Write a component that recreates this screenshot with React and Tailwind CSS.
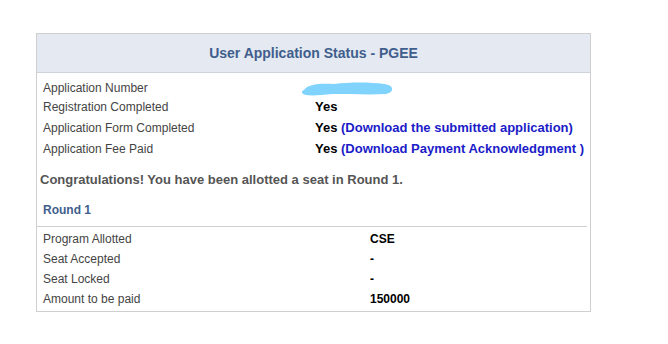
import React from 'react';

const font = { fontFamily: '"Liberation Sans", Arial, sans-serif' };

function Row({ label, children, valueLeft = 'w-[278px]', h = 'h-[20px]', size = 'text-[13px]' }) {
    return (
        <div className={`flex items-center ${h}`}>
            <div className={`${valueLeft} shrink-0 pl-[6px] text-[12px] text-[#444]`}>{label}</div>
            <div className={`${size} font-bold text-black`}>{children}</div>
        </div>
    );
}

function Scribble() {
    return (
        <svg width="96" height="17" viewBox="0 0 96 17" className="block -ml-[15px] mt-[1px]">
            <path
                d="M4 10 C8 4, 20 3, 34 4 C50 2, 70 2, 84 4 C94 5, 95 12, 86 14 C70 15, 50 14, 32 14 C22 15, 12 16, 6 15 C1 14, 1 11, 4 10 Z"
                fill="#7fd3fd"
            />
        </svg>
    );
}

export default function App() {
    return (
        <div className="bg-white w-[668px] h-[344px] pt-[33px] pl-[36px]" style={font}>
            <div className="w-[555px] h-[279px] border border-[#cfcfcf] bg-white">
                {/* Header */}
                <div className="h-[39px] bg-[#e4e9f2] border-b border-[#cfd3da] flex items-center justify-center">
                    <span className="text-[14px] font-bold text-[#3f5e8c]">User Application Status - PGEE</span>
                </div>

                {/* Status rows */}
                <div className="pt-[5px]">
                    <Row label="Application Number" h="h-[19px]">
                        <Scribble />
                    </Row>
                    <Row label="Registration Completed" h="h-[20px]">Yes</Row>
                    <Row label="Application Form Completed" h="h-[21px]">
                        Yes <span className="text-[#1b1bc8]">(Download the submitted application)</span>
                    </Row>
                    <Row label="Application Fee Paid" h="h-[21px]">
                        Yes <span className="text-[#1b1bc8]">(Download Payment Acknowledgment )</span>
                    </Row>
                </div>

                <div className="mt-[11px] pl-[3px] h-[20px] flex items-center text-[13px] font-bold text-[#555]">
                    Congratulations! You have been allotted a seat in Round 1.
                </div>

                <div className="mt-[10px] pl-[6px] h-[20px] flex items-center text-[12px] font-bold text-[#3f5e8c]">
                    Round 1
                </div>

                <div className="mt-[6px] mr-[3px] pt-[2px] border-t border-[#cfcfcf]">
                    <Row label="Program Allotted" valueLeft="w-[333px]" size="text-[12px]">CSE</Row>
                    <Row label="Seat Accepted" valueLeft="w-[333px]" size="text-[12px]">-</Row>
                    <Row label="Seat Locked" valueLeft="w-[333px]" size="text-[12px]">-</Row>
                    <Row label="Amount to be paid" valueLeft="w-[333px]" size="text-[12px]">150000</Row>
                </div>
            </div>
        </div>
    );
}
